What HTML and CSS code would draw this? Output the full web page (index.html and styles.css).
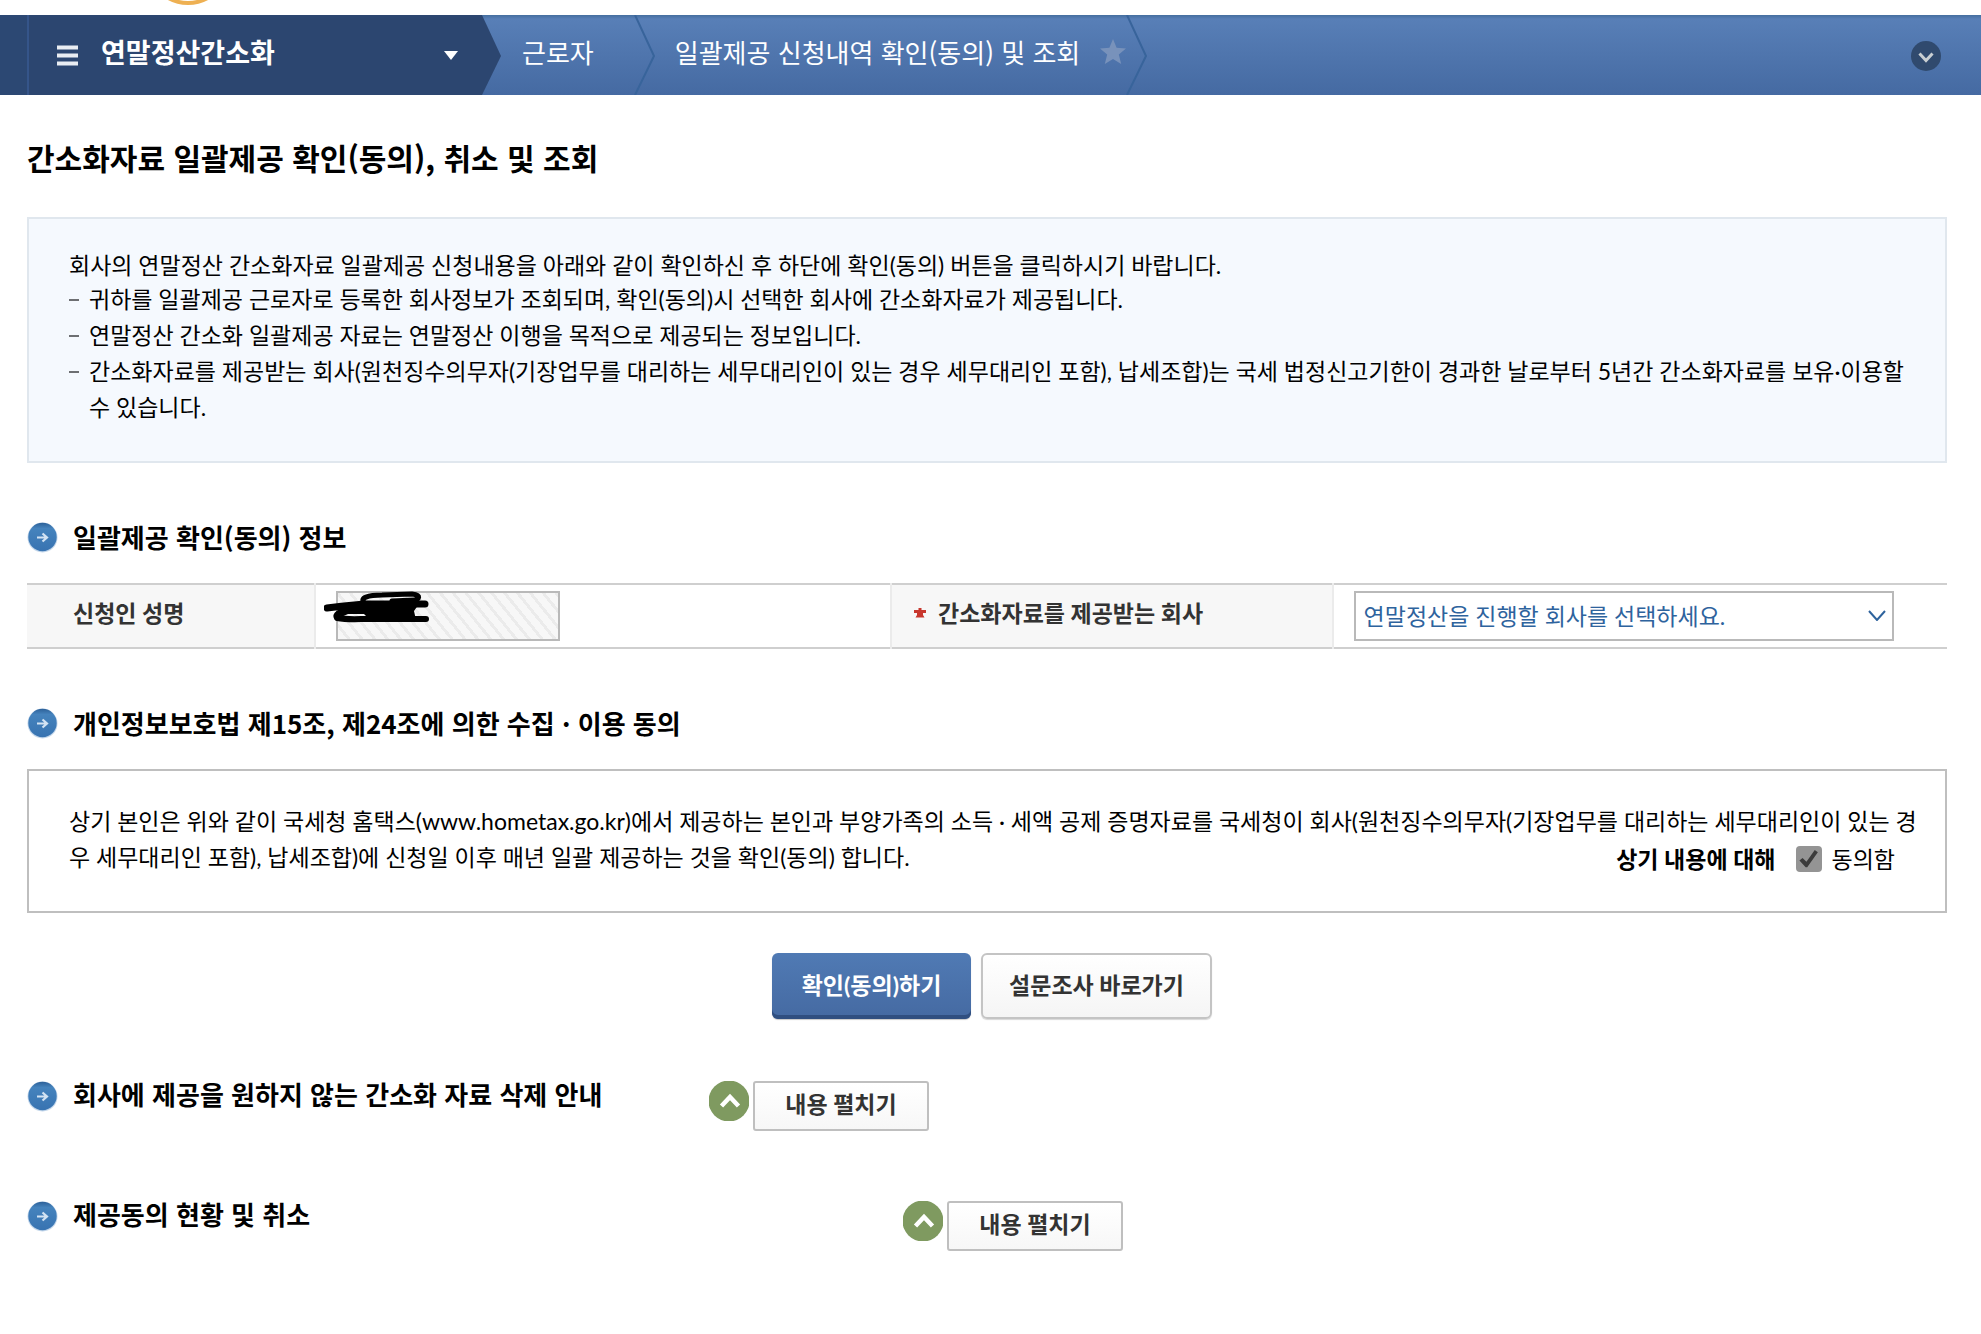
FILE: index.html
```html
<!DOCTYPE html>
<html lang="ko">
<head>
<meta charset="utf-8">
<meta name="viewport" content="width=device-width, initial-scale=1">
<title>간소화자료 일괄제공 확인(동의), 취소 및 조회</title>
<link rel="stylesheet" href="styles.css">
</head>
<body>
<svg class="sprite" aria-hidden="true">
  <defs>
    <linearGradient id="bullet-fill" x1="0" y1="0" x2="0" y2="1">
      <stop offset="0" stop-color="#2d6199"/>
      <stop offset=".2" stop-color="#4583bd"/>
      <stop offset="1" stop-color="#3873b1"/>
    </linearGradient>
  </defs>
  <symbol id="bullet" viewBox="0 0 31 31">
    <circle cx="15.5" cy="15.5" r="15" fill="#c3d6ea"/>
    <circle cx="15.5" cy="15" r="14.2" fill="url(#bullet-fill)"/>
    <path d="M10 15.500h9M15.500 11.500l4.500 4-4.500 4" fill="none" stroke="#d3e3f3" stroke-width="2.200"/>
  </symbol>
  <symbol id="chevron" viewBox="0 0 21 80">
    <path d="M1 0L20 41L1 80" fill="none" stroke="#38649b" stroke-width="2"/>
  </symbol>
  <symbol id="fold" viewBox="0 0 40 40">
    <circle cx="20" cy="20" r="20.500" fill="#7f9a60"/>
    <path d="M12.500 25l8.500-9 8.500 9" fill="none" stroke="#fff" stroke-width="4.500"/>
  </symbol>
</svg>

<div class="brand-strip">
  <svg class="brand-mark" viewBox="0 0 48 6" aria-hidden="true"><circle cx="24" cy="-37" r="40" fill="none" stroke="#eeb052" stroke-width="4"/></svg>
</div>

<nav class="crumbs" aria-label="현재 위치">
  <button type="button" class="crumb-menu">
    <svg class="burger" viewBox="0 0 21 21" aria-hidden="true"><path d="M0 2.500h21M0 10.500h21M0 18.500h21" stroke="#e9edf3" stroke-width="4"/></svg>
    <span class="crumb-title">연말정산간소화</span>
    <svg class="caret" viewBox="0 0 14 9" aria-hidden="true"><path d="M0 0h14L7 9z" fill="#fff"/></svg>
  </button>
  <a class="crumb" href="#">근로자</a>
  <svg class="chevron" aria-hidden="true"><use href="#chevron"/></svg>
  <a class="crumb crumb-current" href="#">일괄제공 신청내역 확인(동의) 및 조회</a>
  <button type="button" class="icon-button star" aria-label="즐겨찾기">
    <svg viewBox="0 0 26 26"><path d="M13 0l3.600 8.800 9.400.6-7.200 6.200 2.400 9.400L13 20l-8.200 5 2.400-9.400L0 9.400l9.400-.6z" fill="#7892bb"/></svg>
  </button>
  <svg class="chevron" aria-hidden="true"><use href="#chevron"/></svg>
  <button type="button" class="icon-button more" aria-label="메뉴 펼치기">
    <svg viewBox="0 0 30 30"><circle cx="15" cy="15" r="15" fill="#304a6e"/><path d="M8.500 12.500l6.500 7 6.500-7" fill="none" stroke="#c9cfd2" stroke-width="3"/></svg>
  </button>
</nav>

<main class="page">
  <h1 class="page-title">간소화자료 일괄제공 확인(동의), 취소 및 조회</h1>

  <div class="notice">
    <p class="notice-lead">회사의 연말정산 간소화자료 일괄제공 신청내용을 아래와 같이 확인하신 후 하단에 확인(동의) 버튼을 클릭하시기 바랍니다.</p>
    <ul class="notice-list">
      <li>귀하를 일괄제공 근로자로 등록한 회사정보가 조회되며, 확인(동의)시 선택한 회사에 간소화자료가 제공됩니다.</li>
      <li>연말정산 간소화 일괄제공 자료는 연말정산 이행을 목적으로 제공되는 정보입니다.</li>
      <li>간소화자료를 제공받는 회사(원천징수의무자(기장업무를 대리하는 세무대리인이 있는 경우 세무대리인 포함), 납세조합)는 국세 법정신고기한이 경과한 날로부터 5년간 간소화자료를 보유·이용할 수 있습니다.</li>
    </ul>
  </div>

  <h2 class="section-title"><svg class="bullet" aria-hidden="true"><use href="#bullet"/></svg>일괄제공 확인(동의) 정보</h2>
  <table class="info">
    <tr>
      <th class="col-name" scope="row"><label for="applicant">신청인 성명</label></th>
      <td class="col-value">
        <div class="masked">
          <input class="field" id="applicant" type="text" readonly>
          <svg class="scribble" viewBox="0 0 106 34" aria-hidden="true">
            <g fill="none" stroke="#000" stroke-linecap="round" stroke-linejoin="round">
              <path d="M3 17C22 14 30 14 41 13L101 13" stroke-width="7"/>
              <path d="M41 12C34 7 45 4 58 4L88 3C98 4 95 9 90 9L68 10" stroke-width="5"/>
              <path d="M31 15C20 20 10 22 13 27C24 29 34 28 44 28L102 28" stroke-width="6"/>
            </g>
            <path d="M26 15L97 10L90 20L92 29L52 31L44 27L40 23L24 23L15 27L18 21z"/>
          </svg>
        </div>
      </td>
      <th class="col-company" scope="row">
        <span class="required-label">
          <svg class="required" viewBox="0 0 12 10" aria-hidden="true"><path d="M4.500 0h3v2H12v3H9v2l1.500 2.500h-9L3 7V5H0V2h4.500z" fill="#c8372d"/></svg>
          <label for="company">간소화자료를 제공받는 회사</label>
        </span>
      </th>
      <td>
        <div class="picker">
          <select class="field select" id="company"><option>연말정산을 진행할 회사를 선택하세요.</option></select>
          <svg class="picker-arrow" viewBox="0 0 18 11" aria-hidden="true"><path d="M1 1l8 9 8-9" fill="none" stroke="#2e639d" stroke-width="2"/></svg>
        </div>
      </td>
    </tr>
  </table>

  <h2 class="section-title">
    <svg class="bullet" aria-hidden="true"><use href="#bullet"/></svg>개인정보보호법 제15조, 제24조에 의한 수집 · 이용 동의</h2>
  <div class="consent">
    <p class="consent-text">상기 본인은 위와 같이 국세청 홈택스(www.hometax.go.kr)에서 제공하는 본인과 부양가족의 소득 · 세액 공제 증명자료를 국세청이 회사(원천징수의무자(기장업무를 대리하는 세무대리인이 있는 경우 세무대리인 포함), 납세조합)에 신청일 이후 매년 일괄 제공하는 것을 확인(동의) 합니다.</p>
    <div class="agree">
      <strong>상기 내용에 대해</strong>
      <input class="check" type="checkbox" id="agree" checked>
      <label for="agree">동의함</label>
    </div>
  </div>

  <div class="actions">
    <button type="button" class="button primary">확인(동의)하기</button>
    <button type="button" class="button plain">설문조사 바로가기</button>
  </div>

  <section class="fold-row">
    <h2 class="section-title fold-title"><svg class="bullet" aria-hidden="true"><use href="#bullet"/></svg>회사에 제공을 원하지 않는 간소화 자료 삭제 안내</h2>
    <svg class="fold-icon" aria-hidden="true"><use href="#fold"/></svg>
    <button type="button" class="fold-button">내용 펼치기</button>
  </section>
  <section class="fold-row">
    <h2 class="section-title fold-title fold-title-wide"><svg class="bullet" aria-hidden="true"><use href="#bullet"/></svg>제공동의 현황 및 취소</h2>
    <svg class="fold-icon" aria-hidden="true"><use href="#fold"/></svg>
    <button type="button" class="fold-button">내용 펼치기</button>
  </section>
</main>
</body>
</html>
```

FILE: styles.css
```css
* {
  box-sizing: border-box;
}

body {
  margin: 0;
  background: #fff;
  color: #000;
  font: 23px/36px Lato, "Noto Sans CJK KR", sans-serif;
}

button,
input,
select {
  font: inherit;
  margin: 0;
}

button {
  cursor: pointer;
}

.sprite {
  position: absolute;
  width: 0;
  height: 0;
}

/* Top strip and location bar */
.brand-strip {
  height: 15px;
  padding-left: 164px;
}

.brand-mark {
  display: block;
  width: 48px;
  height: 6px;
}

.crumbs {
  display: flex;
  align-items: center;
  height: 80px;
  background: linear-gradient(#456f9f, #587fb7 5%, #456aa2);
  font-family: "Noto Sans CJK KR", sans-serif;
}

.crumb-menu {
  display: flex;
  align-items: center;
  width: 502px;
  height: 80px;
  padding: 0 44px 0 57px;
  border: 0;
  background: linear-gradient(90deg, #2c4873 27px, #35558a 27px, #35558a 29px, #2c4670 29px);
  clip-path: polygon(0 0, 482px 0, 501px 41px, 482px 80px, 0 80px);
  color: #fff;
}

.burger {
  width: 21px;
  height: 21px;
}

.crumb-title {
  margin: 0 auto 6px 23px;
  font-size: 27px;
  font-weight: 700;
}

.caret {
  width: 14px;
  height: 9px;
}

.crumb {
  padding: 0 40px 6px 20px;
  color: #fff;
  font-size: 26px;
  text-decoration: none;
}

.crumb-current {
  padding-right: 20px;
}

.chevron {
  width: 21px;
  height: 80px;
}

.icon-button {
  padding: 0;
  border: 0;
  background: none;
}

.icon-button svg {
  display: block;
  width: 100%;
}

.star {
  width: 26px;
  margin-bottom: 6px;
}

.more {
  width: 30px;
  margin: 2px 40px 0 auto;
}

/* Page content */
.page {
  padding: 40px 34px 40px 27px;
}

.page-title {
  margin: 0 0 38px;
  font-family: "Noto Sans CJK KR", sans-serif;
  font-size: 30px;
  line-height: 44px;
}

.notice {
  padding: 30px 36px 36px 40px;
  border: 2px solid #e0e7ee;
  background: #f5f9fe;
}

.notice-lead {
  margin: 0;
  line-height: 32px;
}

.notice-list {
  margin: 0;
  padding: 0;
  list-style: none;
}

.notice-list li {
  position: relative;
  padding-left: 20px;
}

.notice-list li::before {
  content: "";
  position: absolute;
  top: 18px;
  left: 0;
  width: 10px;
  height: 2px;
  background: #6d6f72;
}

.section-title {
  display: flex;
  align-items: center;
  gap: 15px;
  margin: 54px 0 26px;
  font-family: "Noto Sans CJK KR", sans-serif;
  font-size: 26px;
  line-height: 40px;
}

.bullet {
  flex: none;
  width: 31px;
  height: 31px;
}

.info {
  width: 100%;
  border-collapse: collapse;
  table-layout: fixed;
  border-top: 2px solid #cfcfcf;
  border-bottom: 2px solid #cfcfcf;
}

.info th {
  padding: 0 0 6px 46px;
  border-right: 2px solid #ebebeb;
  background: #f7f7f7;
  color: #333;
  text-align: left;
}

.info td {
  padding: 6px 20px;
}

.info .col-name {
  width: 15%;
}

.info .col-value {
  width: 30%;
  border-right: 2px solid #ebebeb;
}

.info .col-company {
  width: 23%;
  padding-left: 22px;
}

.required-label {
  display: flex;
  align-items: center;
  gap: 12px;
}

.required {
  width: 12px;
  height: 10px;
}

.field {
  display: block;
  height: 50px;
  border: 2px solid #b9b9b9;
  border-radius: 0;
}

.masked {
  position: relative;
  width: 224px;
}

.masked .field {
  width: 100%;
  background: repeating-linear-gradient(51deg, #f7f7f7 0 7px, #ebebeb 7px 10px);
}

.scribble {
  position: absolute;
  top: 0;
  left: -12px;
  width: 106px;
  height: 34px;
}

.picker {
  position: relative;
  max-width: 540px;
}

.select {
  width: 100%;
  padding: 0 40px 0 8px;
  background: #fff;
  color: #2e639d;
  appearance: none;
}

.picker-arrow {
  position: absolute;
  top: 19px;
  right: 8px;
  width: 18px;
  height: 11px;
  pointer-events: none;
}

.consent {
  display: grid;
  padding: 32px 24px 34px 40px;
  border: 2px solid #bfbfbf;
}

.consent-text,
.agree {
  grid-area: 1 / 1;
}

.consent-text {
  margin: 0;
}

.agree {
  display: flex;
  align-items: center;
  justify-self: end;
  gap: 10px;
  margin-right: 26px;
  padding-top: 38px;
}

.check {
  display: grid;
  width: 26px;
  height: 26px;
  margin-left: 10px;
  border-radius: 4px;
  background: #949494;
  appearance: none;
}

.check:checked::before {
  content: "";
  background: #3b3b3b;
  clip-path: polygon(15% 56%, 27% 46%, 42% 61%, 74% 15%, 86% 24%, 45% 82%, 39% 82%);
}

.actions {
  display: flex;
  justify-content: center;
  gap: 10px;
  margin: 40px 0 62px;
  padding-left: 10px;
}

.button {
  height: 66px;
  border-radius: 6px;
  font-weight: 700;
}

.primary {
  width: 199px;
  padding: 0 0 2px;
  border: 0;
  background: linear-gradient(#507ab4, #456aa2);
  box-shadow: inset 0 -4px #304f80, 0 1px 1px #c8c8c8;
  color: #fff;
}

.plain {
  width: 231px;
  padding: 0 0 2px;
  border: 2px solid #c4c4c4;
  background: linear-gradient(#fff, #f5f5f5);
  box-shadow: 0 1px 1px #d8d8d8;
  color: #333;
}

.fold-row {
  display: flex;
  align-items: flex-start;
  height: 50px;
  margin-bottom: 70px;
}

.fold-title {
  align-items: flex-start;
  width: 682px;
  margin: 0;
  line-height: 26px;
}

.fold-title-wide {
  width: 876px;
}

.fold-icon {
  width: 40px;
  height: 40px;
}

.fold-button {
  width: 176px;
  height: 50px;
  margin-left: 4px;
  padding: 0 0 4px;
  border: 2px solid #bfbfbf;
  border-radius: 3px;
  background: linear-gradient(#fff, #f7f7f7);
  color: #333;
  font-weight: 700;
}
```
